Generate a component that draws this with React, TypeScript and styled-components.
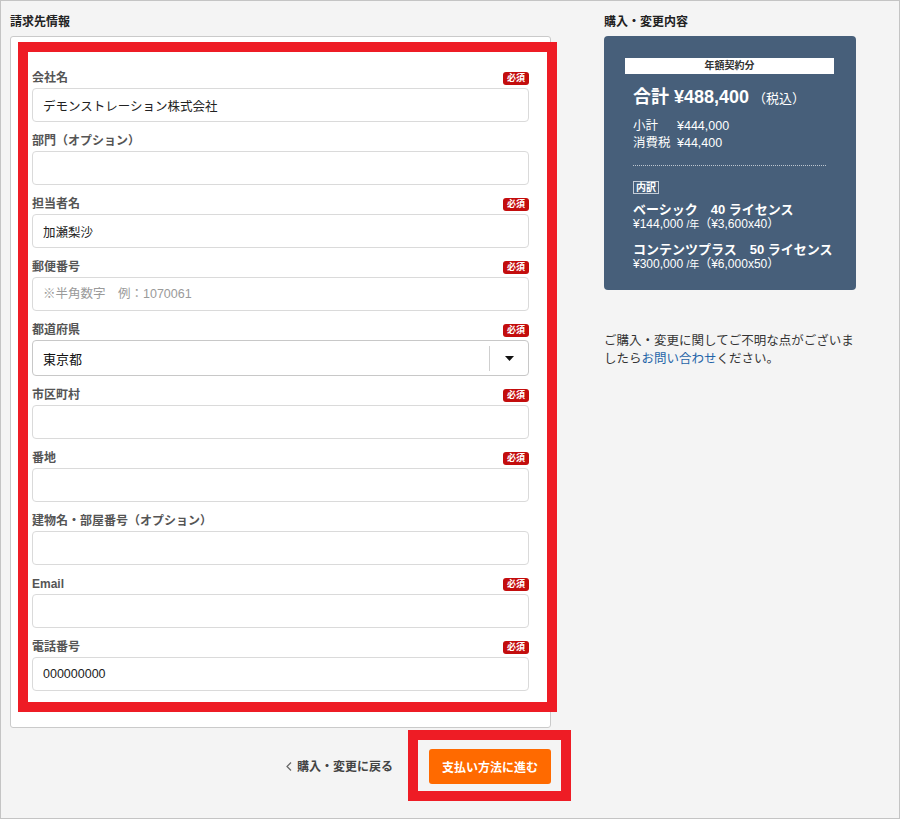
import React from 'react';
import styled, { createGlobalStyle } from 'styled-components';

const GlobalStyle = createGlobalStyle`
  html, body {
    margin: 0;
    padding: 0;
  }
  body {
    font-family: "Liberation Sans", "Noto Sans CJK JP", sans-serif;
    color: #222;
    background: #f4f4f4;
  }
  * {
    box-sizing: border-box;
  }
`;

const Page = styled.div`
  width: 900px;
  height: 819px;
  border: 1px solid #c4c4c4;
  background: #f4f4f4;
  display: flex;
  align-items: flex-start;
  padding: 13px 0 0 9px;
`;

const LeftColumn = styled.div`
  width: 541px;
  display: flex;
  flex-direction: column;
`;

const RightColumn = styled.div`
  width: 252px;
  margin-left: 53px;
  display: flex;
  flex-direction: column;
`;

const SectionTitle = styled.div`
  font-size: 12px;
  font-weight: 700;
  line-height: 16px;
  color: #222;
  margin-bottom: 6px;
`;

const FormCard = styled.div`
  position: relative;
  background: #fff;
  border: 1px solid #cacaca;
  border-radius: 3px;
  padding: 34px 21px 36px 21px;
  display: flex;
  flex-direction: column;
  gap: 12px;
`;

// 注釈用の赤枠
const Highlight = styled.div<{ $inset: string }>`
  position: absolute;
  inset: ${p => p.$inset};
  border: 10px solid #ee1c25;
  pointer-events: none;
`;

const Field = styled.div`
  display: flex;
  flex-direction: column;
  gap: 3px;
`;

const LabelRow = styled.div`
  height: 14px;
  display: flex;
  align-items: center;
  justify-content: space-between;
`;

const Label = styled.label`
  font-size: 12px;
  font-weight: 700;
  line-height: 14px;
  color: #555;
`;

const Required = styled.span`
  width: 26px;
  height: 13px;
  border-radius: 3px;
  background: #c30d0d;
  color: #fff;
  font-size: 9px;
  font-weight: 700;
  line-height: 13px;
  display: flex;
  align-items: center;
  justify-content: center;
`;

const TextInput = styled.input`
  display: block;
  width: 100%;
  height: 34px;
  border: 1px solid #dadada;
  border-radius: 4px;
  padding: 0 10px;
  font-family: inherit;
  font-size: 12.5px;
  color: #222;
  background: #fff;
  outline: none;

  &::placeholder {
    color: #9a9a9a;
  }
`;

const SelectBox = styled.div`
  height: 36px;
  border: 1px solid #c8c8c8;
  border-radius: 4px;
  background: #fff;
  display: flex;
  align-items: center;
  padding-left: 10px;
  font-size: 13px;
  color: #111;
`;

const SelectValue = styled.span`
  flex: 1;
`;

const SelectDivider = styled.span`
  width: 1px;
  height: 25px;
  background: #cfcfcf;
`;

const SelectCaret = styled.span`
  width: 38px;
  display: flex;
  align-items: center;
  justify-content: center;
`;

const Actions = styled.div`
  margin-top: 21px;
  display: flex;
  align-items: center;
  justify-content: flex-end;
  gap: 36px;
`;

const BackLink = styled.a`
  display: flex;
  align-items: center;
  gap: 5px;
  font-size: 12px;
  font-weight: 700;
  color: #444;
  text-decoration: none;
  line-height: 16px;
  cursor: pointer;
`;

const ButtonWrap = styled.div`
  position: relative;
`;

const PrimaryButton = styled.button`
  width: 122px;
  height: 35px;
  border: none;
  border-radius: 3px;
  background: #ff6a00;
  color: #fff;
  font-family: inherit;
  font-size: 12px;
  font-weight: 700;
  cursor: pointer;
`;

const SummaryCard = styled.div`
  background: #475f7a;
  border-radius: 4px;
  padding: 22px 22px 19px 21px;
  color: #fff;
`;

const PlanBar = styled.div`
  height: 16px;
  background: #fff;
  color: #333;
  font-size: 10px;
  font-weight: 700;
  line-height: 16px;
  text-align: center;
`;

const SummaryBody = styled.div`
  padding: 0 8px;
  display: flex;
  flex-direction: column;
  align-items: flex-start;
`;

const Total = styled.div`
  margin-top: 11px;
  font-size: 18px;
  font-weight: 700;
  line-height: 24px;
  white-space: nowrap;
`;

const TaxNote = styled.span`
  font-size: 13px;
  font-weight: 400;
  margin-left: 4px;
`;

const Breakdown = styled.div`
  margin-top: 7px;
  display: grid;
  grid-template-columns: 44px auto;
  font-size: 12.5px;
  line-height: 17px;
`;

const DottedRule = styled.div`
  align-self: stretch;
  margin-top: 13px;
  border-top: 1px dotted rgba(255, 255, 255, 0.65);
`;

const Tag = styled.span`
  margin-top: 15px;
  border: 1px solid #c5ced9;
  padding: 0 2px;
  font-size: 10px;
  font-weight: 700;
  line-height: 11px;
`;

const Items = styled.div`
  margin-top: 9px;
  display: flex;
  flex-direction: column;
  gap: 12px;
`;

const ItemName = styled.div`
  font-size: 13px;
  font-weight: 700;
  line-height: 14px;
  height: 14px;
  white-space: nowrap;
`;

const ItemPrice = styled.div`
  font-size: 12px;
  line-height: 14px;
  height: 14px;
  white-space: nowrap;

  small {
    font-size: 10px;
    line-height: 1;
  }
`;

const Note = styled.p`
  margin: 42px 0 0 0;
  font-size: 12.5px;
  line-height: 18px;
  color: #333;

  a {
    color: #1f64a8;
    text-decoration: none;
  }
`;

interface FieldDef {
  label: string;
  required: boolean;
  value?: string;
  placeholder?: string;
  select?: boolean;
}

const fields: FieldDef[] = [
  { label: '会社名', required: true, value: 'デモンストレーション株式会社' },
  { label: '部門（オプション）', required: false },
  { label: '担当者名', required: true, value: '加瀬梨沙' },
  { label: '郵便番号', required: true, placeholder: '※半角数字　例：1070061' },
  { label: '都道府県', required: true, value: '東京都', select: true },
  { label: '市区町村', required: true },
  { label: '番地', required: true },
  { label: '建物名・部屋番号（オプション）', required: false },
  { label: 'Email', required: true },
  { label: '電話番号', required: true, value: '000000000' },
];

const items = [
  { name: 'ベーシック　40 ライセンス', price: '¥144,000', unit: '（¥3,600x40）' },
  { name: 'コンテンツプラス　50 ライセンス', price: '¥300,000', unit: '（¥6,000x50）' },
];

const App: React.FC = () => {
  return (
    <>
      <GlobalStyle />
      <Page>
        <LeftColumn>
          <SectionTitle>請求先情報</SectionTitle>
          <FormCard>
            {fields.map(f => (
              <Field key={f.label}>
                <LabelRow>
                  <Label>{f.label}</Label>
                  {f.required && <Required>必須</Required>}
                </LabelRow>
                {f.select ? (
                  <SelectBox>
                    <SelectValue>{f.value}</SelectValue>
                    <SelectDivider />
                    <SelectCaret>
                      <svg width="9" height="5" viewBox="0 0 9 5">
                        <path d="M0 0 H9 L4.5 5 Z" fill="#111" />
                      </svg>
                    </SelectCaret>
                  </SelectBox>
                ) : (
                  <TextInput defaultValue={f.value} placeholder={f.placeholder} />
                )}
              </Field>
            ))}
            <Highlight $inset="5px -7px 15px 7px" />
          </FormCard>
          <Actions>
            <BackLink>
              <svg width="6" height="9" viewBox="0 0 6 9">
                <path d="M5 0.5 L1 4.5 L5 8.5" fill="none" stroke="#666" strokeWidth="1.2" />
              </svg>
              購入・変更に戻る
            </BackLink>
            <ButtonWrap>
              <PrimaryButton>支払い方法に進む</PrimaryButton>
              <Highlight $inset="-19px -20px -17px -21px" />
            </ButtonWrap>
          </Actions>
        </LeftColumn>

        <RightColumn>
          <SectionTitle>購入・変更内容</SectionTitle>
          <SummaryCard>
            <PlanBar>年額契約分</PlanBar>
            <SummaryBody>
              <Total>
                合計 ¥488,400<TaxNote>（税込）</TaxNote>
              </Total>
              <Breakdown>
                <span>小計</span>
                <span>¥444,000</span>
                <span>消費税</span>
                <span>¥44,400</span>
              </Breakdown>
              <DottedRule />
              <Tag>内訳</Tag>
              <Items>
                {items.map(it => (
                  <div key={it.name}>
                    <ItemName>{it.name}</ItemName>
                    <ItemPrice>
                      {it.price} <small>/年</small>
                      {it.unit}
                    </ItemPrice>
                  </div>
                ))}
              </Items>
            </SummaryBody>
          </SummaryCard>
          <Note>
            ご購入・変更に関してご不明な点がございま
            <br />
            したら<a href="#">お問い合わせ</a>ください。
          </Note>
        </RightColumn>
      </Page>
    </>
  );
};

export default App;
